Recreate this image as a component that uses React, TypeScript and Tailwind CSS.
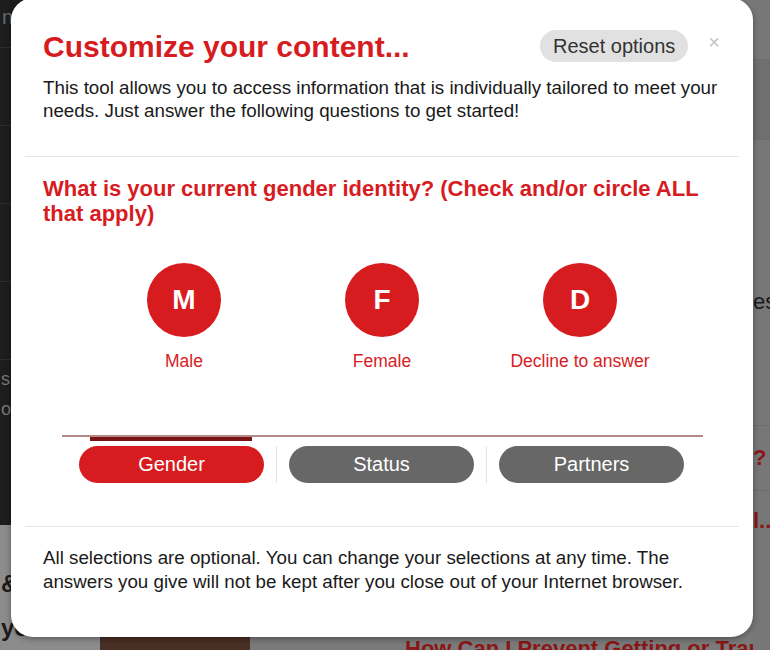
import { useState } from "react"

const options = [
  { letter: "M", label: "Male" },
  { letter: "F", label: "Female" },
  { letter: "D", label: "Decline to answer" },
]

const tabs = ["Gender", "Status", "Partners"]

function Background() {
  return (
    <div className="flex h-full w-full">
      <div className="flex w-[100px] shrink-0 flex-col">
        <div className="flex h-[540px] flex-col bg-[#1d1d1d] text-[#6a6a6a] text-[20px]">
          <div className="h-[48px] border-b border-[#2c2c2c] pl-[2px] leading-[34px]">nt</div>
          <div className="h-[78px] border-b border-[#2c2c2c]" />
          <div className="h-[78px] border-b border-[#2c2c2c]" />
          <div className="h-[78px] border-b border-[#2c2c2c]" />
          <div className="h-[78px] border-b border-[#2c2c2c]" />
          <div className="pt-[4px] pl-[1px] text-[18px] leading-[30px] text-[#777]">
            <div>s</div>
            <div>o</div>
          </div>
        </div>
        <div className="flex-1 bg-[#8c8c8c] pl-[1px] pt-[37px] text-[24px] font-bold leading-[44px] text-[#1a1a1a]">
          <div>&amp;</div>
          <div>you</div>
        </div>
      </div>
      <div className="flex min-w-0 flex-1 flex-col overflow-hidden bg-[#7a7a7a]">
        <div className="h-[637px] shrink-0" />
        <div className="flex flex-1">
          <div className="w-[150px] shrink-0 bg-[#4a2f24]" />
          <div className="flex-1 pl-[155px] pt-[2px] text-[22px] font-bold leading-[20px] text-[#8a1616] whitespace-nowrap">
            How Can I Prevent Getting or Transmit
          </div>
        </div>
      </div>
      <div className="flex w-[17px] shrink-0 flex-col overflow-hidden bg-[#777] text-[22px] whitespace-nowrap">
        <div className="h-[60px] shrink-0 border-b border-[#6e6e6e]" />
        <div className="h-[80px] shrink-0 border-b border-[#6c6c6c] bg-[#6f6f6f]" />
        <div className="pt-[150px] leading-[24px] text-[#1a1a1a]">est</div>
        <div className="mt-[111px] border-t border-[#6c6c6c] pt-[20px] font-bold leading-[24px] text-[#8a1616]">?</div>
        <div className="mt-[20px] border-t border-[#6c6c6c] pt-[18px] font-bold leading-[24px] text-[#8a1616]">l...</div>
      </div>
    </div>
  )
}

export default function App() {
  const [active, setActive] = useState(0)

  return (
    <div
      className="relative h-[650px] w-[770px] overflow-hidden"
      style={{ fontFamily: '"Liberation Sans", Arial, sans-serif' }}
    >
      <Background />

      <div className="absolute left-[11px] top-[-2px] flex h-[639px] w-[742px] flex-col rounded-[22px] bg-white shadow-[0_2px_6px_rgba(0,0,0,0.35)]">
        <div className="px-[32px] pt-[32px]">
          <div className="flex items-start">
            <h1 className="flex-1 text-[30px] font-bold leading-[34px] text-[#d71c1f]">
              Customize your content...
            </h1>
            <button className="h-[32px] rounded-full bg-[#e1e1e1] px-[13px] text-[20px] leading-[32px] text-[#333]">
              Reset options
            </button>
            <button className="ml-[20px] mr-[1px] mt-[1px] text-[20px] leading-[22px] text-[#c4c4c4]">
              ×
            </button>
          </div>
          <p className="mt-[12px] whitespace-nowrap text-[18.75px] leading-[23px] text-[#1a1a1a]">
            This tool allows you to access information that is individually tailored to meet your
            <br />
            needs. Just answer the following questions to get started!
          </p>
        </div>

        <div className="mx-[14px] mt-[34px] border-t border-[#e6e6e6]" />

        <div className="px-[32px]">
          <h2 className="mt-[19px] whitespace-nowrap text-[22px] font-bold leading-[25px] text-[#d71c1f]">
            What is your current gender identity? (Check and/or circle ALL
            <br />
            that apply)
          </h2>

          <div className="ml-[42px] mt-[37px] grid w-[594px] grid-cols-3">
            {options.map((o) => (
              <div key={o.letter} className="flex flex-col items-center">
                <div className="flex h-[74px] w-[74px] items-center justify-center rounded-full bg-[#d71c1f] text-[28px] font-bold text-white">
                  {o.letter}
                </div>
                <div className="mt-[13px] text-[17.5px] leading-[22px] text-[#d71c1f]">{o.label}</div>
              </div>
            ))}
          </div>

          <div className="ml-[19px] mt-[63px] w-[641px] border-t-2 border-[#b38a88]">
            <div
              className="h-[4px] w-[162px] bg-[#7a1414]"
              style={{ marginLeft: 28 + active * 211 }}
            />
            <div className="mt-[5px] flex pl-[17px]">
              {tabs.map((t, i) => (
                <div key={t} className="flex">
                  {i > 0 && <div className="mx-[12px] w-px bg-[#e2e2e2]" />}
                  <button
                    onClick={() => setActive(i)}
                    className={`h-[37px] w-[185px] rounded-full text-[20px] leading-[37px] text-white ${
                      active === i ? "bg-[#d71c1f]" : "bg-[#676767]"
                    }`}
                  >
                    {t}
                  </button>
                </div>
              ))}
            </div>
          </div>
        </div>

        <div className="mx-[14px] mt-[43px] border-t border-[#e6e6e6]" />

        <p className="mt-[19px] whitespace-nowrap px-[32px] text-[18.75px] leading-[24px] text-[#1a1a1a]">
          All selections are optional. You can change your selections at any time. The
          <br />
          answers you give will not be kept after you close out of your Internet browser.
        </p>
      </div>
    </div>
  )
}
